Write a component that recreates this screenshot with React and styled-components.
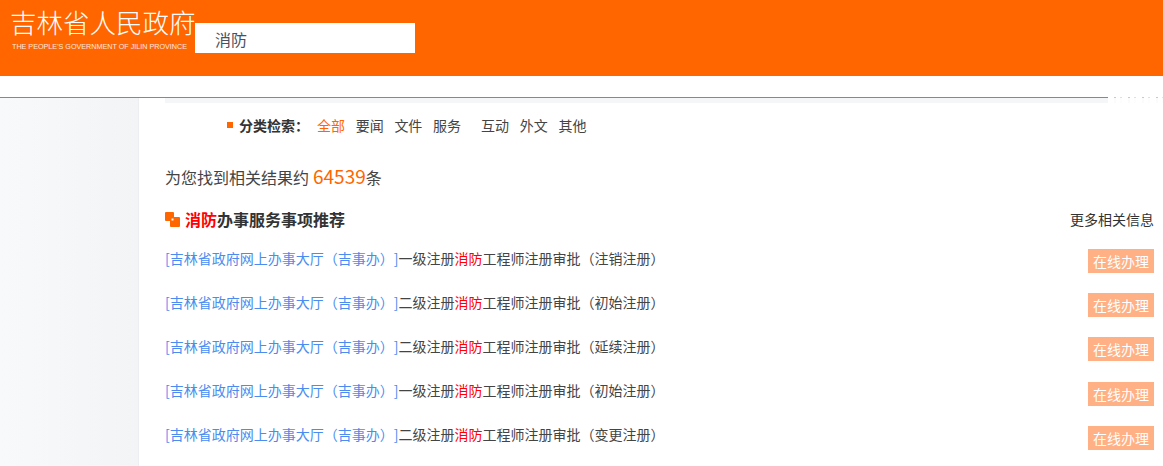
import styled, { createGlobalStyle } from "styled-components";

const GlobalStyle = createGlobalStyle`
  html, body {
    margin: 0;
    padding: 0;
    background: #fff;
    overflow: hidden;
    font-family: "Noto Sans CJK SC", "Noto Sans", sans-serif;
    text-spacing-trim: space-all;
  }
`;

const Page = styled.div`
  width: 1163px;
  height: 466px;
  overflow: hidden;
  position: relative;
`;

const Header = styled.header`
  display: flex;
  height: 76px;
  background: #ff6600;
`;

const Logo = styled.div`
  width: 195px;
  padding: 6px 0 0 10px;
  box-sizing: border-box;
  color: #fff;
`;

const LogoTitle = styled.div`
  font-size: 26.5px;
  line-height: 32px;
  font-weight: 300;
  white-space: nowrap;
`;

const LogoSub = styled.div`
  font-family: "Liberation Sans", sans-serif;
  font-size: 7.2px;
  line-height: 10px;
  margin-top: 4px;
  margin-left: 2px;
  white-space: nowrap;
  opacity: 0.85;
`;

const SearchBox = styled.div`
  width: 220px;
  height: 30px;
  margin-top: 23px;
  background: #fff;
  padding-left: 20px;
  box-sizing: border-box;
  font-size: 16px;
  line-height: 33px;
  color: #4a5160;
`;

const NavBar = styled.div`
  height: 21px;
  border-bottom: 1px solid #e8692a;
`;

/* white fragments lying over the rule and the grey strip at the far right */
const NavCover = styled.div`
  position: absolute;
  top: 97px;
  right: 0;
  width: 55px;
  height: 6px;
  background: repeating-linear-gradient(
    90deg,
    #fff 0 6px,
    rgba(255, 255, 255, 0.55) 6px 8px,
    #fff 8px 12px,
    rgba(255, 255, 255, 0.75) 12px 14px
  );
`;

const Body = styled.div`
  display: flex;
  height: 368px;
`;

const Sidebar = styled.aside`
  width: 139px;
  flex-shrink: 0;
  background: linear-gradient(90deg, #f8f9fa 0%, #f2f4f6 100%);
  border-right: 1px solid #eceef1;
  box-sizing: border-box;
`;

const Main = styled.main`
  flex: 1;
  min-width: 0;
  padding-left: 26px;
`;

const TopStrip = styled.div`
  height: 5px;
  background: #f5f6f8;
`;

const FilterRow = styled.div`
  display: flex;
  align-items: center;
  height: 20px;
  margin: 12px 0 0 62px;
  font-size: 14px;
  color: #444;
`;

const FilterMark = styled.span`
  width: 6px;
  height: 6px;
  background: #ff6600;
  margin-right: 6px;
`;

const FilterLabel = styled.span`
  font-size: 14px;
  font-weight: 700;
  color: #333;
  width: 78px;
  white-space: nowrap;
`;

const FilterItem = styled.span`
  margin-right: ${(p) => p.$gap || 10.7}px;
  color: ${(p) => (p.$active ? "#ff6600" : "#444")};
`;

const ResultCount = styled.div`
  margin-top: 26px;
  height: 30px;
  line-height: 30px;
  font-size: 16px;
  color: #444;
  white-space: nowrap;
`;

const CountNumber = styled.span`
  font-size: 19px;
  color: #ff6600;
  margin-left: 4px;
`;

const SectionHead = styled.div`
  display: flex;
  align-items: center;
  justify-content: space-between;
  margin-top: 16px;
  height: 24px;
  padding-right: 9px;
`;

const SectionTitle = styled.h3`
  display: flex;
  align-items: center;
  margin: 0;
  font-size: 16px;
  font-weight: 700;
  color: #333;
`;

const TitleMark = styled.svg`
  width: 15px;
  height: 15px;
  margin-right: 5px;
`;

const Red = styled.span`
  color: #f00;
`;

const MoreLink = styled.span`
  font-size: 14px;
  color: #333;
`;

const List = styled.div`
  margin-top: 5px;
`;

const Row = styled.div`
  display: flex;
  align-items: center;
  justify-content: space-between;
  height: 44.2px;
  padding-right: 9px;
`;

const RowText = styled.div`
  margin-bottom: 0.8px;
  font-size: 14px;
  color: #444;
  white-space: nowrap;
`;

const Source = styled.span`
  color: #4a8cf0;
`;

const HandleButton = styled.span`
  width: 66px;
  height: 24px;
  margin-top: 6px;
  line-height: 25px;
  text-align: center;
  font-size: 14px;
  color: #fff;
  background: #ffb085;
`;

const filters = ["要闻", "文件"];
const filtersAfter = ["互动", "外文", "其他"];

const rows = [
  { level: "一级", tail: "注销注册" },
  { level: "二级", tail: "初始注册" },
  { level: "二级", tail: "延续注册" },
  { level: "一级", tail: "初始注册" },
  { level: "二级", tail: "变更注册" },
];

export default function App() {
  return (
    <Page>
      <GlobalStyle />
      <Header>
        <Logo>
          <LogoTitle>吉林省人民政府</LogoTitle>
          <LogoSub>THE PEOPLE'S GOVERNMENT OF JILIN PROVINCE</LogoSub>
        </Logo>
        <SearchBox>消防</SearchBox>
      </Header>
      <NavBar />
      <NavCover />
      <Body>
        <Sidebar />
        <Main>
          <TopStrip />
          <FilterRow>
            <FilterMark />
            <FilterLabel>分类检索：</FilterLabel>
            <FilterItem $active>全部</FilterItem>
            {filters.map((f) => (
              <FilterItem key={f}>{f}</FilterItem>
            ))}
            <FilterItem $gap={20}>服务</FilterItem>
            {filtersAfter.map((f) => (
              <FilterItem key={f}>{f}</FilterItem>
            ))}
          </FilterRow>
          <ResultCount>
            为您找到相关结果约<CountNumber>64539</CountNumber>条
          </ResultCount>
          <SectionHead>
            <SectionTitle>
              <TitleMark viewBox="0 0 15 15">
                <rect x="0" y="0" width="9" height="9" rx="1" fill="#ff6600" />
                <rect x="5" y="5" width="10" height="10" rx="1" fill="#ff6600" />
                <rect x="6.5" y="6.5" width="2" height="2" fill="#fff" />
              </TitleMark>
              <Red>消防</Red>办事服务事项推荐
            </SectionTitle>
            <MoreLink>更多相关信息</MoreLink>
          </SectionHead>
          <List>
            {rows.map((r, i) => (
              <Row key={i}>
                <RowText>
                  <Source>[吉林省政府网上办事大厅（吉事办）]</Source>
                  {r.level}注册<Red>消防</Red>工程师注册审批（{r.tail}）
                </RowText>
                <HandleButton>在线办理</HandleButton>
              </Row>
            ))}
          </List>
        </Main>
      </Body>
    </Page>
  );
}
